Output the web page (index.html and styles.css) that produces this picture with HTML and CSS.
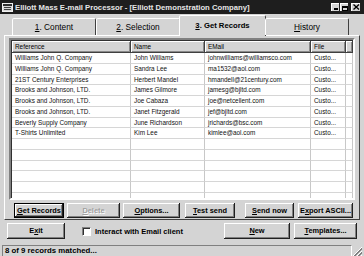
FILE: index.html
```html
<!DOCTYPE html>
<html>
<head>
<meta charset="utf-8">
<link rel="stylesheet" href="styles.css">
</head>
<body>
<div class="window">
  <div class="titlebar">
    <svg class="appicon" width="11" height="9" viewBox="0 0 11 9">
      <rect x="0.5" y="0.5" width="10" height="8" fill="#d8d8d8" stroke="#f0f0f0"/>
      <rect x="1" y="1" width="9" height="2" fill="#303030"/>
      <line x1="2" y1="4.5" x2="9" y2="4.5" stroke="#404040"/>
      <line x1="2" y1="6.5" x2="9" y2="6.5" stroke="#404040"/>
    </svg>
    <span class="title">Elliott Mass E-mail Processor - [Elliott Demonstration Company]</span>
    <div class="capbtns">
      <div class="cbtn"><span class="min"></span></div>
      <div class="cbtn"><span class="max"></span></div>
      <div class="cbtn close">
        <svg width="7" height="6" viewBox="0 0 7 6"><path d="M0.5 0.5 L6 5.5 M6 0.5 L0.5 5.5" stroke="#000" stroke-width="1.3"/></svg>
      </div>
    </div>
  </div>

  <div class="tabs">
    <div class="tab"><u>1</u>. Content</div>
    <div class="tab"><u>2</u>. Selection</div>
    <div class="tab active"><u>3</u>. Get Records</div>
    <div class="tab"><u>H</u>istory</div>
  </div>

  <div class="page">
    <div class="list">
      <div class="lhead">
        <div class="hc">Reference</div>
        <div class="hc">Name</div>
        <div class="hc">EMail</div>
        <div class="hc">File</div>
        <div class="hc"></div>
      </div>
      <div class="lbody">
        <div class="row"><div>Williams John Q. Company</div><div>John Williams</div><div>johnwilliams@williamsco.com</div><div>Custo...</div><div></div></div>
        <div class="row"><div>Williams John Q. Company</div><div>Sandra Lee</div><div>ma1532@aol.com</div><div>Custo...</div><div></div></div>
        <div class="row"><div>21ST Century Enterprises</div><div>Herbert Mandel</div><div>hmandell@21century.com</div><div>Custo...</div><div></div></div>
        <div class="row"><div>Brooks and Johnson, LTD.</div><div>James Gilmore</div><div>jamesg@bjltd.com</div><div>Custo...</div><div></div></div>
        <div class="row"><div>Brooks and Johnson, LTD.</div><div>Joe Cabaza</div><div>joe@netcellent.com</div><div>Custo...</div><div></div></div>
        <div class="row"><div>Brooks and Johnson, LTD.</div><div>Janet Fitzgerald</div><div>jef@bjltd.com</div><div>Custo...</div><div></div></div>
        <div class="row"><div>Beverly Supply Company</div><div>June Richardson</div><div>jrichards@bsc.com</div><div>Custo...</div><div></div></div>
        <div class="row"><div>T-Shirts Unlimited</div><div>Kim Lee</div><div>kimlee@aol.com</div><div>Custo...</div><div></div></div>
        <div class="row"><div></div><div></div><div></div><div></div><div></div></div>
        <div class="row"><div></div><div></div><div></div><div></div><div></div></div>
        <div class="row"><div></div><div></div><div></div><div></div><div></div></div>
        <div class="row"><div></div><div></div><div></div><div></div><div></div></div>
        <div class="row"><div></div><div></div><div></div><div></div><div></div></div>
        <div class="row"><div></div><div></div><div></div><div></div><div></div></div>
      </div>
    </div>
    <div class="btnrow">
      <div class="btn default w-get"><u>G</u>et Records</div>
      <div class="btn disabled w-del"><u>D</u>elete</div>
      <div class="btn w-opt"><u>O</u>ptions...</div>
      <div class="btn w-test"><u>T</u>est send</div>
      <div class="btn w-send"><u>S</u>end now</div>
      <div class="btn w-exp">E<u>x</u>port ASCII...</div>
    </div>
  </div>

  <div class="bottomrow">
    <div class="btn w-exit">E<u>x</u>it</div>
    <label class="check"><span class="box"></span>Interact with Email client</label>
    <div class="btn w-new"><u>N</u>ew</div>
    <div class="btn w-tpl"><u>T</u>emplates...</div>
  </div>

  <div class="statusbar">
    <div class="spanel">8 of 9 records matched...</div>
    <svg class="grip" width="11" height="11" viewBox="0 0 11 11">
      <path d="M10 1 L1 10 M10 5 L5 10 M10 9 L9 10" stroke="#fff" stroke-width="1"/>
      <path d="M10 2 L2 10 M10 3 L3 10 M10 6 L6 10 M10 7 L7 10" stroke="#808080" stroke-width="1"/>
    </svg>
  </div>
</div>
</body>
</html>
```

FILE: styles.css
```css
* { box-sizing: border-box; }
html, body { margin: 0; padding: 0; }
body {
  width: 364px;
  height: 256px;
  overflow: hidden;
  background: #d4d4d4;
  font-family: "Liberation Sans", Arial, sans-serif;
  color: #000;
}
u { text-decoration: underline; text-underline-offset: 1px; }

.window {
  width: 364px;
  height: 256px;
  display: flex;
  flex-direction: column;
}

/* title bar */
.titlebar {
  height: 14px;
  flex: none;
  background: #1e1e1e;
  color: #e6e6e6;
  display: flex;
  align-items: center;
  padding: 0 3px 0 2px;
  font-weight: bold;
  font-size: 7.7px;
  white-space: nowrap;
}
.appicon { flex: none; }
.title { margin-left: 2px; }
.capbtns { margin-left: auto; display: flex; align-items: center; }
.cbtn {
  width: 9px;
  height: 9px;
  background: #d4d4d4;
  box-shadow: inset -1px -1px #202020, inset 1px 1px #fff;
  display: flex;
  align-items: flex-end;
  justify-content: center;
  padding-bottom: 2px;
}
.cbtn.close { margin-left: 2px; width: 10px; align-items: center; padding: 0; }
.min { width: 4px; height: 2px; background: #000; }
.max { width: 6px; height: 5px; border: 1px solid #000; border-top-width: 2px; margin-bottom: -1px; }

/* tabs */
.tabs {
  height: 21px;
  flex: none;
  display: flex;
  align-items: flex-end;
  padding-left: 12px;
  position: relative;
  z-index: 1;
}
.tab {
  width: 84px;
  height: 17px;
  border: 1px solid;
  border-bottom: none;
  border-color: #fff #404040 transparent #fff;
  border-radius: 2px 2px 0 0;
  font-size: 8.3px;
  text-align: center;
  line-height: 16px;
  background: #d4d4d4;
}
.tab.active {
  width: 87px;
  height: 21px;
  margin: 0 -1px -1px -1px;
  font-weight: bold;
  font-size: 7.7px;
  line-height: 19px;
}

/* page */
.page {
  height: 185px;
  flex: none;
  margin: 0 4px;
  border: 1px solid;
  border-color: #fff #404040 #404040 #fff;
  padding: 2px 4px 1px 4px;
  display: flex;
  flex-direction: column;
}

.list {
  height: 162px;
  flex: none;
  background: #fff;
  border: 2px solid;
  border-color: #808080 #fff #fff #808080;
  box-shadow: inset 1px 1px #303030;
  padding: 1px 0 0 1px;
  overflow: hidden;
  font-size: 6.4px;
}
.lhead, .row {
  display: grid;
  grid-template-columns: 119px 74px 106px 35px 1fr;
}
.lhead { height: 12px; }
.hc {
  background: #d4d4d4;
  box-shadow: inset -1px -1px #404040, inset 1px 1px #fff, inset -2px -2px #8a8a8a;
  padding-left: 3px;
  line-height: 12px;
  white-space: nowrap;
  overflow: hidden;
}
.row { height: 10.75px; }
.row > div {
  border-right: 1px solid #c8c8c8;
  border-bottom: 1px solid #d6d6d6;
  padding-left: 3px;
  line-height: 10px;
  white-space: nowrap;
  overflow: hidden;
  color: #101010;
}

/* buttons */
.btnrow {
  display: flex;
  margin-top: 3px;
  height: 15px;
  padding-left: 5px;
}
.btn {
  height: 15px;
  background: #d4d4d4;
  box-shadow: inset -1px -1px #202020, inset 1px 1px #fff, inset -2px -2px #808080;
  font-size: 7.4px;
  font-weight: bold;
  text-align: center;
  line-height: 15px;
  white-space: nowrap;
  flex: none;
}
.btn.default {
  border: 1px solid #000;
  box-shadow: inset -1px -1px #202020, inset 1px 1px #fff, inset -2px -2px #808080;
  line-height: 13px;
}
.btn.disabled { color: #a0a0a0; text-shadow: 1px 1px #fff; }
.w-get { width: 50px; }
.w-del { width: 53px; margin-left: 3px; }
.w-opt { width: 57px; margin-left: 3px; }
.w-test { width: 50px; margin-left: 5px; }
.w-send { width: 49px; margin-left: 10px; }
.w-exp { width: 55px; margin-left: 4px; }

.bottomrow {
  display: flex;
  align-items: center;
  margin-top: 3px;
  height: 16px;
  flex: none;
  padding-left: 7px;
}
.bottomrow .btn { height: 16px; line-height: 16px; }
.w-exit { width: 58px; }
.check {
  display: flex;
  align-items: center;
  margin-left: 17px;
  font-size: 7.5px;
  font-weight: bold;
  white-space: nowrap;
}
.box {
  width: 9px;
  height: 9px;
  background: #fff;
  border: 1px solid;
  border-color: #808080 #fff #fff #808080;
  box-shadow: inset 1px 1px #303030;
  margin-right: 4px;
}
.w-new { width: 66px; margin-left: auto; }
.w-tpl { width: 63px; margin-left: 4px; margin-right: 7px; }

/* status bar */
.statusbar {
  margin-top: 5px;
  height: 13px;
  flex: none;
  display: flex;
  align-items: stretch;
  padding: 1px 1px 0 2px;
}
.spanel {
  flex: 1;
  border: 1px solid;
  border-color: #808080 #fff #fff #808080;
  font-size: 7.8px;
  font-weight: bold;
  line-height: 10px;
  padding-left: 2px;
  white-space: nowrap;
}
.grip { flex: none; align-self: flex-end; }
```
